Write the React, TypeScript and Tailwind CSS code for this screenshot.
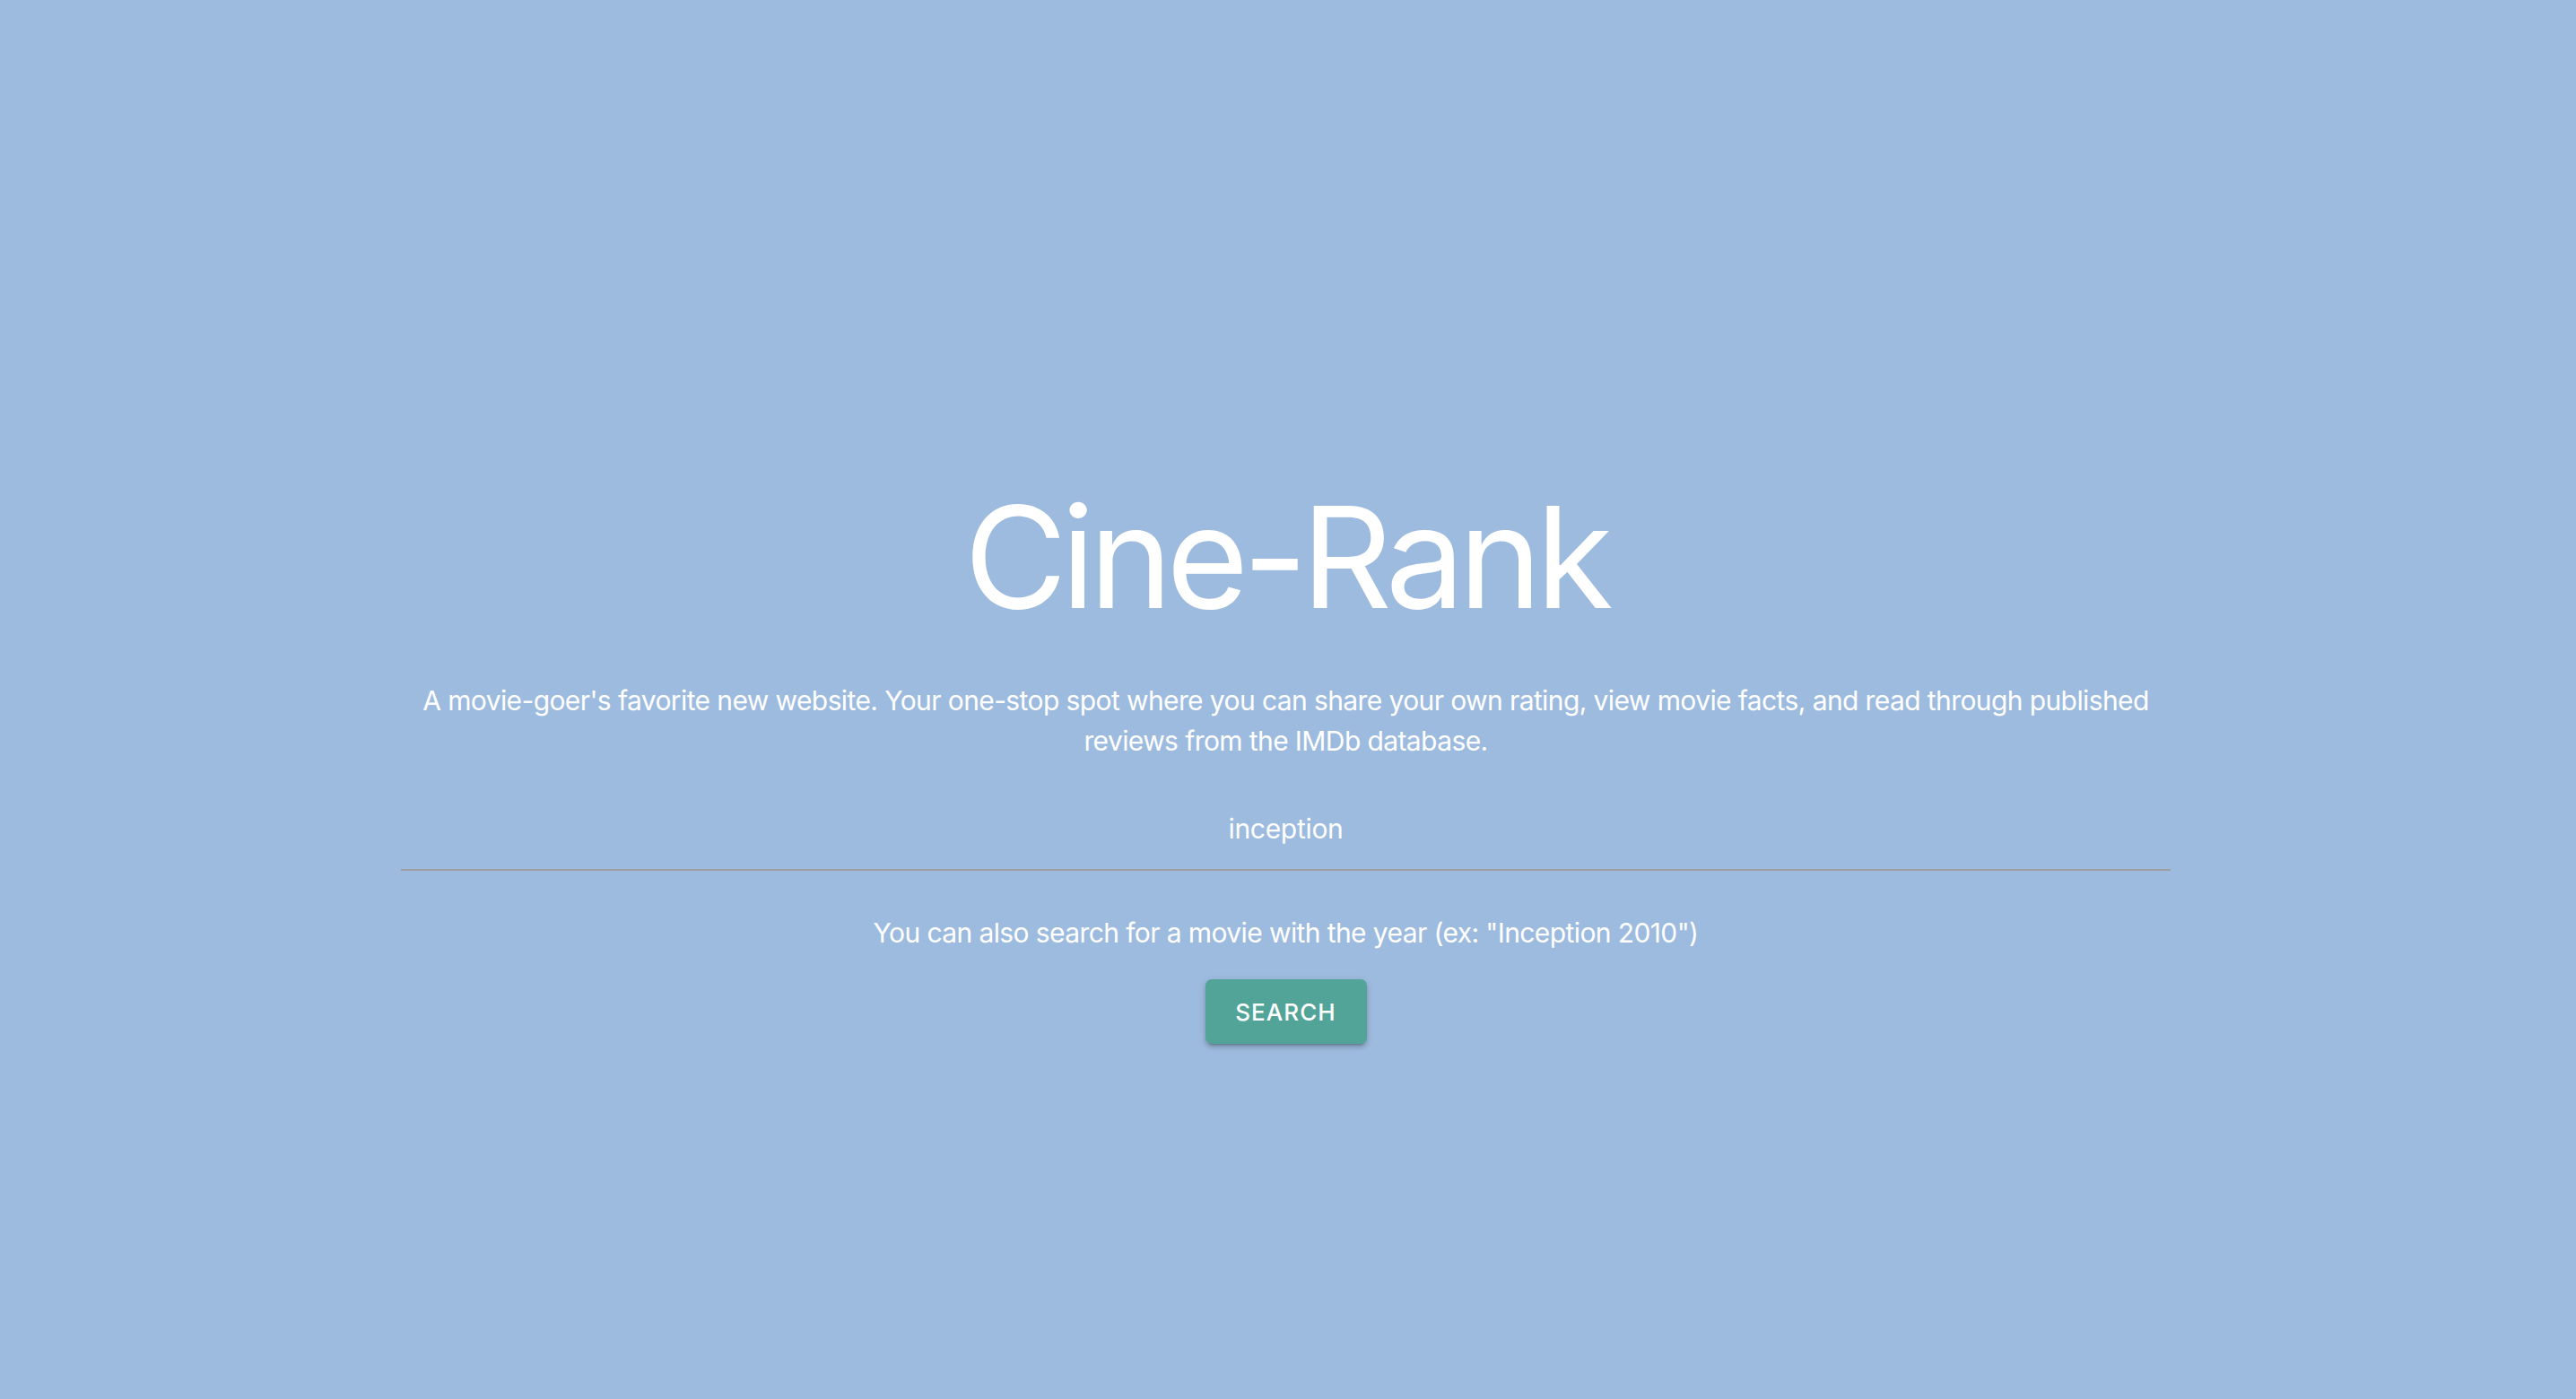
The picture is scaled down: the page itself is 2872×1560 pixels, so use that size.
export default function App() {
  return (
    <div className="min-h-screen w-full bg-[#9dbbde] font-['Inter','Noto_Sans',sans-serif] text-white">
      <main className="ml-[447px] flex w-[1973px] flex-col items-center pt-[543px] text-center">
        {/* Title */}
        <h1 className="text-[157px] font-normal leading-none tracking-[-0.042em]">Cine-Rank</h1>

        {/* Intro */}
        <p className="mt-[59px] text-[30px] leading-[45px] tracking-[-0.02em]">
          A movie-goer's favorite new website. Your one-stop spot where you can share your own rating, view movie
          facts, and read through published reviews from the IMDb database.
        </p>

        {/* Search field */}
        <div className="mt-[52px] w-full">
          <input
            type="text"
            readOnly
            value="inception"
            className="h-[70px] w-full border-b-2 border-[#9e9e9e] bg-transparent pb-[23px] text-center text-[30px] tracking-[-0.01em] text-white outline-none"
          />
        </div>

        <p className="mt-[47px] text-[30px] leading-[45px] tracking-[-0.02em]">
          You can also search for a movie with the year (ex: "Inception 2010")
        </p>

        <button
          type="button"
          className="mt-[29px] h-[72px] w-[180px] rounded-[7px] bg-[#52a398] text-[26px] font-medium uppercase tracking-[0.04em] text-white shadow-[0_5px_2px_-4px_rgba(0,0,0,0.2),0_4px_4px_0_rgba(0,0,0,0.14),0_2px_9px_0_rgba(0,0,0,0.12)]"
        >
          Search
        </button>
      </main>
    </div>
  );
}
